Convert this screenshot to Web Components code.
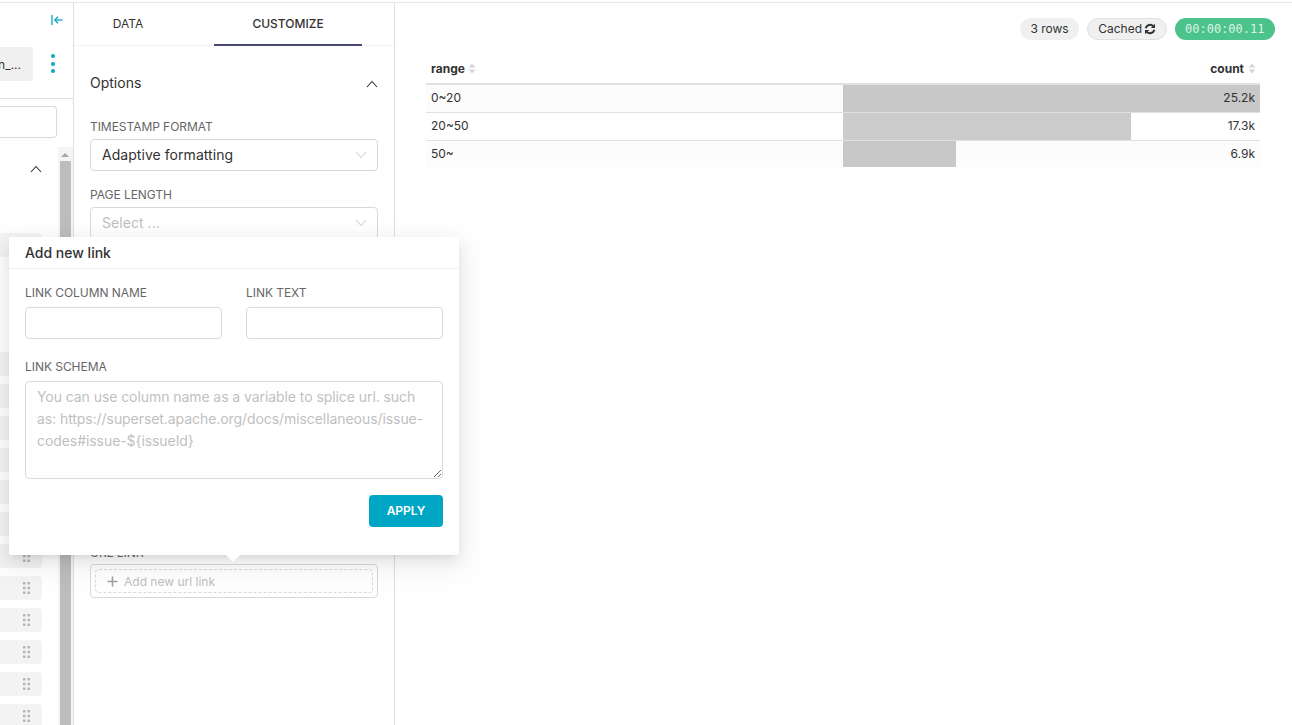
<!DOCTYPE html>
<html>
<head>
<meta charset="utf-8">
<title>Explore</title>
<style>
  html, body { margin: 0; height: 100%; overflow: hidden; background: #fff; }
  body { font-family: Inter, "Liberation Sans", sans-serif; color: #323232; }
</style>
</head>
<body>
<explore-page>
  <datasource-panel slot="left"></datasource-panel>
  <control-panel slot="middle"></control-panel>
  <chart-pane slot="right"></chart-pane>
  <link-popover slot="overlay"></link-popover>
</explore-page>

<script>
// Small helper so each element only has to give its styles and markup
class ShadowElement extends HTMLElement {
  constructor() {
    super();
    this.attachShadow({ mode: "open" });
  }

  connectedCallback() {
    this.render();
  }

  render() {}
}

// Page frame: three columns and the popover on top
class ExplorePage extends ShadowElement {
  render() {
    this.shadowRoot.innerHTML = `
    <style>
      :host {
        display: flex;
        position: relative;
        height: 725px;
        box-sizing: border-box;
        margin-top: 2px;
        border-top: 1px solid #e6e6e6;
        overflow: hidden;
      }
      .overlay {
        position: absolute;
        left: 9px;
        top: 234px;
      }
    </style>
    <slot name="left"></slot>
    <slot name="middle"></slot>
    <slot name="right"></slot>
    <div class="overlay"><slot name="overlay"></slot></div>
    `;
  }
}

// Left column, cut off by the window edge
class DatasourcePanel extends ShadowElement {
  render() {
    const grip = `<svg width="7" height="12" viewBox="0 0 7 12" fill="#b4b4b4">
      <rect x="0" y="0" width="2.5" height="2.5"/><rect x="4.5" y="0" width="2.5" height="2.5"/>
      <rect x="0" y="4.75" width="2.5" height="2.5"/><rect x="4.5" y="4.75" width="2.5" height="2.5"/>
      <rect x="0" y="9.5" width="2.5" height="2.5"/><rect x="4.5" y="9.5" width="2.5" height="2.5"/></svg>`;
    const rows = Array.from({ length: 12 }, () => `<div class="row">${grip}</div>`).join("");

    this.shadowRoot.innerHTML = `
    <style>
      :host {
        display: flex;
        flex-direction: column;
        flex: 0 0 74px;
        width: 74px;
        box-sizing: border-box;
        border-right: 1px solid #e0e0e0;
        overflow: hidden;
      }
      .collapse {
        display: flex;
        justify-content: flex-end;
        padding: 11px 10px 0 0;
        height: 33px;
        box-sizing: border-box;
      }
      .source {
        display: flex;
        align-items: center;
        height: 63px;
        box-sizing: border-box;
        padding-bottom: 7px;
        border-bottom: 1px solid #e0e0e0;
      }
      .source-name {
        flex: 0 0 33px;
        height: 34px;
        margin-top: 1px;
        display: flex;
        align-items: center;
        justify-content: flex-end;
        box-sizing: border-box;
        padding: 0 12px 0 0;
        background: #f0f0f0;
        border-radius: 0 4px 4px 0;
        font-size: 12px;
        white-space: nowrap;
        overflow: hidden;
      }
      .kebab {
        margin-left: 18px;
        display: flex;
        flex-direction: column;
        gap: 3.5px;
      }
      .kebab i {
        width: 4px;
        height: 4px;
        border-radius: 50%;
        background: #0fa5c6;
      }
      .search {
        width: 57px;
        height: 32px;
        margin-top: 7px;
        box-sizing: border-box;
        border: 1px solid #d9d9e3;
        border-left: 0;
        border-radius: 0 4px 4px 0;
        flex: none;
      }
      .list {
        display: flex;
        margin-top: 9px;
        flex: 1;
        min-height: 0;
      }
      .items {
        flex: 0 0 58px;
        padding-top: 18px;
      }
      .chevron {
        display: flex;
        justify-content: flex-end;
        padding-right: 16px;
        height: 68px;
      }
      .row, .first {
        width: 42px;
        height: 24px;
        background: #f4f4f4;
        border-radius: 0 4px 4px 0;
        margin-bottom: 8px;
        display: flex;
        align-items: center;
        justify-content: flex-end;
        padding-right: 12px;
        box-sizing: border-box;
      }
      .first { margin-bottom: 95px; }
      .scrollbar {
        flex: 0 0 15px;
        background: #f5f5f5;
        display: flex;
        flex-direction: column;
        align-items: flex-start;
        margin-right: 1px;
      }
      .arrow {
        width: 0;
        height: 0;
        margin: 6px 0 4px 3px;
        border: 4px solid transparent;
        border-top: 0;
        border-bottom: 4px solid #a8a8a8;
      }
      .thumb {
        width: 11px;
        margin-left: 2px;
        flex: 1;
        background: #bdbdbd;
      }
    </style>
    <div class="collapse">
      <svg width="12" height="12" viewBox="0 0 12 12" fill="none" stroke="#0fa5c6" stroke-width="1.3">
        <path d="M1 1v10"/><path d="M11.5 6H4"/><path d="M7 2.8L3.8 6 7 9.2"/>
      </svg>
    </div>
    <div class="source">
      <div class="source-name">n_...</div>
      <div class="kebab"><i></i><i></i><i></i></div>
    </div>
    <div class="search"></div>
    <div class="list">
      <div class="items">
        <div class="chevron">
          <svg width="12" height="8" viewBox="0 0 12 8" fill="none" stroke="#323232" stroke-width="1.1">
            <path d="M1 7l5-5.5L11 7"/>
          </svg>
        </div>
        <div class="first">${grip}</div>
        ${rows}
      </div>
      <div class="scrollbar"><div class="arrow"></div><div class="thumb"></div></div>
    </div>
    `;
  }
}

// Select style field; a "placeholder" attribute greys out the text
class SelectField extends ShadowElement {
  render() {
    const muted = this.hasAttribute("placeholder");
    this.shadowRoot.innerHTML = `
    <style>
      :host { display: block; }
      label {
        display: block;
        font-size: 12px;
        line-height: 16px;
        letter-spacing: -0.05px;
        color: #666;
        margin-bottom: 4px;
      }
      .box {
        display: flex;
        align-items: center;
        justify-content: space-between;
        height: 32px;
        box-sizing: border-box;
        padding: 0 10px 2px 11px;
        border: 1px solid #d9d9d9;
        border-radius: 4px;
        font-size: 14px;
        letter-spacing: 0.05px;
        color: ${muted ? "#bfbfbf" : "#323232"};
      }
      svg { margin-top: 1px; }
    </style>
    <label>${this.getAttribute("label")}</label>
    <div class="box">
      <span><slot></slot></span>
      <svg width="12" height="8" viewBox="0 0 12 8" fill="none" stroke="#c8c8c8" stroke-width="1"><path d="M1 1l5 5.5L11 1"/></svg>
    </div>
    `;
  }
}

// Middle column with the tabs and the customize options
class ControlPanel extends ShadowElement {
  render() {
    this.shadowRoot.innerHTML = `
    <style>
      :host {
        display: flex;
        flex-direction: column;
        flex: 0 0 321px;
        width: 321px;
        box-sizing: border-box;
        border-right: 1px solid #e0e0e0;
      }
      .tabs {
        display: grid;
        grid-template-columns: 108px 148px;
        gap: 32px;
        height: 43px;
        box-sizing: border-box;
        border-bottom: 1px solid #f0f0f0;
        font-size: 12px;
        line-height: 42px;
        text-align: center;
        font-weight: 500;
      }
      .tabs div { height: 43px; box-sizing: border-box; }
      .tabs .on { border-bottom: 2px solid #484c75; color: #323232; }
      .tabs .off { font-weight: 400; }
      .body { padding: 0 16px; }
      .head {
        display: flex;
        align-items: center;
        justify-content: space-between;
        padding: 27px 0 0;
        height: 48px;
        box-sizing: border-box;
        font-size: 14px;
        color: #323232;
        margin-bottom: 25px;
      }
      .head span { margin-top: -2px; }
      select-field { margin-bottom: 16px; }
      .url-label {
        margin-top: 306px;
        font-size: 12px;
        line-height: 16px;
        color: #666;
      }
      .url-box {
        margin-top: 3px;
        height: 34px;
        box-sizing: border-box;
        padding: 4px;
        border: 1px solid #d9d9d9;
        border-radius: 4px;
      }
      .add {
        display: flex;
        align-items: center;
        gap: 6px;
        height: 24px;
        box-sizing: border-box;
        padding-left: 11px;
        border: 1px dashed #d9d9d9;
        border-radius: 4px;
        font-size: 12px;
        color: #bfbfbf;
      }
    </style>
    <div class="tabs">
      <div class="off">DATA</div>
      <div class="on">CUSTOMIZE</div>
    </div>
    <div class="body">
      <div class="head">
        <span>Options</span>
        <svg width="12" height="8" viewBox="0 0 12 8" fill="none" stroke="#323232" stroke-width="1.1"><path d="M1 7l5-5.5L11 7"/></svg>
      </div>
      <select-field label="TIMESTAMP FORMAT">Adaptive formatting</select-field>
      <select-field label="PAGE LENGTH" placeholder>Select ...</select-field>
      <div class="url-label">URL LINK</div>
      <div class="url-box">
        <div class="add">
          <svg width="11" height="11" viewBox="0 0 11 11" fill="none" stroke="#a0a0a0" stroke-width="1.6"><path d="M5.5 0.5v10M0.5 5.5h10"/></svg>
          <span>Add new url link</span>
        </div>
      </div>
    </div>
    `;
  }
}

// Pill shown over the results table
class StatusPill extends ShadowElement {
  render() {
    const kind = this.getAttribute("kind") || "plain";
    this.shadowRoot.innerHTML = `
    <style>
      :host {
        display: inline-flex;
        align-items: center;
        gap: 2px;
        height: 22px;
        box-sizing: border-box;
        padding: 0 10.5px 1px;
        border-radius: 11px;
        font-size: 12px;
        background: #f0f0f0;
        color: #323232;
      }
      :host([kind="outline"]) { border: 1px solid #e0e0e0; padding: 0 10px 1px; gap: 1.5px; }
      :host([kind="timer"]) {
        background: #4dc38c;
        color: #dcf3e8;
        padding: 0 10.5px 1px;
        font-family: "DejaVu Sans Mono", "Liberation Mono", monospace;
        font-size: 12px;
      }
    </style>
    <slot></slot>
    ${kind === "outline" ? `<svg width="12" height="12" viewBox="0 0 12 12" fill="none" stroke="#323232" stroke-width="2">
      <path d="M1.6 5.2A4.5 4.5 0 0 1 9.4 3.4"/><path d="M10.4 6.8A4.5 4.5 0 0 1 2.6 8.6"/>
      <path d="M11 0.8V5H6.8z" fill="#323232" stroke="none"/><path d="M1 11.2V7H5.2z" fill="#323232" stroke="none"/>
    </svg>` : ""}
    `;
  }
}

// Results table; the bar in the value column is a cell background
class ResultsTable extends ShadowElement {
  render() {
    const data = [
      { range: "0~20", count: "25.2k", pct: 100, bar: "#c8c8c8" },
      { range: "20~50", count: "17.3k", pct: 69, bar: "#cccccc" },
      { range: "50~", count: "6.9k", pct: 27, bar: "#c8c8c8" },
    ];
    const sort = `<svg width="8" height="11" viewBox="0 0 8 11" fill="#d6d6d6"><path d="M4 0.5L7.5 4.5H0.5z"/><path d="M4 10.5L0.5 6.5H7.5z"/></svg>`;
    const rows = data.map((row, i) => `
      <div class="row ${i % 2 === 0 ? "odd" : ""}">
        <div class="cell">${row.range}</div>
        <div class="cell num" style="background: linear-gradient(to right, ${row.bar} ${row.pct}%, transparent ${row.pct}%)">${row.count}</div>
      </div>`).join("");

    this.shadowRoot.innerHTML = `
    <style>
      :host {
        display: block;
        font-size: 12px;
        color: #323232;
      }
      .row {
        display: grid;
        grid-template-columns: 417px 417px;
        height: 28px;
        box-sizing: border-box;
        border-bottom: 1px solid #e0e0e0;
      }
      .row:last-child { border-bottom: 0; height: 26px; }
      .row:last-child .cell { padding-bottom: 2px; }
      .row.odd { background: #fcfcfc; }
      .head {
        height: 31px;
        border-bottom: 2px solid #e0e0e0;
        font-weight: 700;
      }
      .cell {
        display: flex;
        align-items: center;
        gap: 3px;
        padding: 0 5px 3px;
      }
      .num { justify-content: flex-end; }
      .head .cell { padding-bottom: 0; }
      .head .num { padding-right: 4px; gap: 4px; }
    </style>
    <div class="row head">
      <div class="cell">range ${sort}</div>
      <div class="cell num">count ${sort}</div>
    </div>
    ${rows}
    `;
  }
}

// Right column
class ChartPane extends ShadowElement {
  render() {
    this.shadowRoot.innerHTML = `
    <style>
      :host {
        display: block;
        flex: 1;
        min-width: 0;
        box-sizing: border-box;
        padding: 15px 17px 0 31px;
      }
      .status {
        display: flex;
        justify-content: flex-end;
        gap: 8px;
        height: 22px;
        margin-bottom: 14px;
      }
      results-table { width: 834px; }
    </style>
    <div class="status">
      <status-pill>3 rows</status-pill>
      <status-pill kind="outline">Cached</status-pill>
      <status-pill kind="timer">00:00:00.11</status-pill>
    </div>
    <results-table></results-table>
    `;
  }
}

// Labelled text box used by the popover
class LinkField extends ShadowElement {
  render() {
    this.shadowRoot.innerHTML = `
    <style>
      :host { display: block; min-width: 0; }
      label {
        display: block;
        font-size: 12px;
        line-height: 16px;
        letter-spacing: -0.05px;
        color: #666;
        margin-bottom: 6px;
      }
      .box {
        height: 32px;
        box-sizing: border-box;
        border: 1px solid #d9d9e3;
        border-radius: 4px;
      }
    </style>
    <label>${this.getAttribute("label")}</label>
    <div class="box"></div>
    `;
  }
}

// The "Add new link" popover
class LinkPopover extends ShadowElement {
  render() {
    this.shadowRoot.innerHTML = `
    <style>
      :host {
        display: block;
        position: relative;
        width: 450px;
        height: 318px;
        box-sizing: border-box;
        background: #fff;
        border-radius: 2px;
        box-shadow: 0 3px 6px -4px rgba(0, 0, 0, 0.12), 0 6px 16px 0 rgba(0, 0, 0, 0.08), 0 9px 28px 8px rgba(0, 0, 0, 0.05);
      }
      .title {
        height: 32px;
        box-sizing: border-box;
        padding: 0 16px;
        border-bottom: 1px solid #f0f0f0;
        font-size: 14px;
        font-weight: 500;
        line-height: 32px;
        color: #323232;
      }
      .content { padding: 16px; }
      .cols {
        display: grid;
        grid-template-columns: 197px 197px;
        gap: 24px;
        margin-bottom: 20px;
      }
      label {
        display: block;
        font-size: 12px;
        line-height: 16px;
        letter-spacing: -0.05px;
        color: #666;
        margin-bottom: 6px;
      }
      .schema {
        height: 98px;
        box-sizing: border-box;
        padding: 4px 11px;
        border: 1px solid #d9d9e3;
        border-radius: 4px;
        font-size: 14px;
        line-height: 22px;
        letter-spacing: -0.07px;
        color: #bfbfbf;
        overflow: auto;
        resize: vertical;
      }
      .actions {
        display: flex;
        justify-content: flex-end;
        margin-top: 16px;
      }
      button {
        width: 74px;
        height: 32px;
        padding: 0 0 2px;
        border: 0;
        border-radius: 4px;
        background: #00a7c4;
        color: #fff;
        font: 600 12px Inter, "Liberation Sans", sans-serif;
      }
      .tip {
        position: absolute;
        left: 219px;
        bottom: -5px;
        width: 10px;
        height: 10px;
        background: #fff;
        transform: rotate(45deg);
      }
    </style>
    <div class="title">Add new link</div>
    <div class="content">
      <div class="cols">
        <link-field label="LINK COLUMN NAME"></link-field>
        <link-field label="LINK TEXT"></link-field>
      </div>
      <label>LINK SCHEMA</label>
      <div class="schema">You can use column name as a variable to splice url. such as: https://superset.apache.org/docs/miscellaneous/issue-codes#issue-\${issueId}</div>
      <div class="actions"><button>APPLY</button></div>
    </div>
    <div class="tip"></div>
    `;
  }
}

customElements.define("explore-page", ExplorePage);
customElements.define("datasource-panel", DatasourcePanel);
customElements.define("select-field", SelectField);
customElements.define("control-panel", ControlPanel);
customElements.define("status-pill", StatusPill);
customElements.define("results-table", ResultsTable);
customElements.define("chart-pane", ChartPane);
customElements.define("link-field", LinkField);
customElements.define("link-popover", LinkPopover);
</script>
</body>
</html>
